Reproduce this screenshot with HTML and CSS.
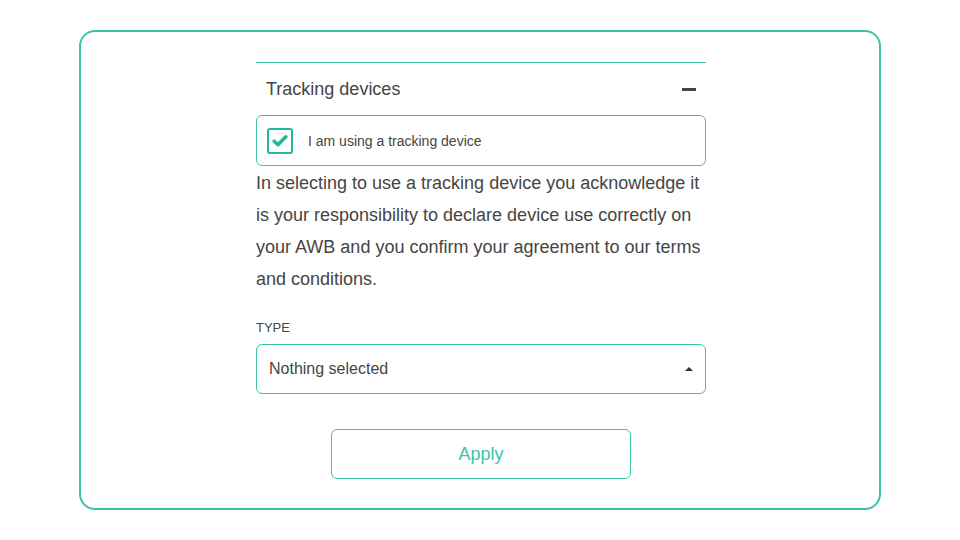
FILE: index.html
```html
<!DOCTYPE html>
<html>
<head>
<meta charset="utf-8">
<link rel="stylesheet" href="styles.css">
</head>
<body>
<div class="card">
  <div class="panel">
    <div class="section-head">
      <span class="section-title">Tracking devices</span>
      <span class="minus"></span>
    </div>
    <label class="check-box">
      <span class="check">
        <svg width="16" height="14" viewBox="0 0 16 14"><path d="M2.2 7.2 L6 10.8 L13.8 2.8" fill="none" stroke="#22b99a" stroke-width="3.6" stroke-linecap="round" stroke-linejoin="round"/></svg>
      </span>
      <span class="check-label">I am using a tracking device</span>
    </label>
    <p class="notice">In selecting to use a tracking device you acknowledge it is your responsibility to declare device use correctly on your AWB and you confirm your agreement to our terms and conditions.</p>
    <div class="field-label">TYPE</div>
    <div class="select">
      <span>Nothing selected</span>
      <span class="caret"></span>
    </div>
    <div class="actions">
      <button class="apply">Apply</button>
    </div>
  </div>
</div>
</body>
</html>
```
FILE: styles.css
```css
html, body {
  margin: 0;
  padding: 0;
  background: #fff;
}
body {
  font-family: "Liberation Sans", Arial, sans-serif;
  color: #454545;
  padding: 30px 79px;
}
.card {
  height: 476px;
  border: 2px solid #3cc3a7;
  border-radius: 16px;
  display: flex;
  justify-content: center;
}
.panel {
  width: 450px;
  margin-top: 30px;
  margin-left: 2px;
  border-top: 1px solid #3cc3a7;
}
.section-head {
  display: flex;
  align-items: center;
  justify-content: space-between;
  height: 52px;
  padding: 0 10px;
}
.section-title {
  font-size: 18px;
  color: #454545;
}
.minus {
  width: 14px;
  height: 3px;
  background: #454545;
}
.check-box {
  display: flex;
  align-items: center;
  height: 49px;
  border: 1px solid #3cc3a7;
  border-radius: 6px;
  padding: 0 10px;
}
.check {
  width: 22px;
  height: 22px;
  border: 2px solid #22b99a;
  border-radius: 3px;
  display: flex;
  align-items: center;
  justify-content: center;
}
.check-label {
  margin-left: 15px;
  font-size: 14px;
  color: #454545;
}
.notice {
  margin: 1px 0 0;
  font-size: 18px;
  line-height: 32px;
  color: #454545;
}
.field-label {
  margin-top: 25px;
  font-size: 13px;
  color: #454545;
}
.select {
  margin-top: 9px;
  height: 48px;
  border: 1px solid #3cc3a7;
  border-radius: 6px;
  display: flex;
  align-items: center;
  justify-content: space-between;
  padding: 0 12px;
  font-size: 16px;
}
.caret {
  width: 0;
  height: 0;
  border-left: 4px solid transparent;
  border-right: 4px solid transparent;
  border-bottom: 4px solid #333;
}
.actions {
  display: flex;
  justify-content: center;
  margin-top: 35px;
}
.apply {
  width: 300px;
  height: 50px;
  background: #fff;
  border: 1px solid #3cc3a7;
  border-radius: 6px;
  font-family: "Liberation Sans", Arial, sans-serif;
  font-size: 18px;
  color: #3cc3a7;
}
```
